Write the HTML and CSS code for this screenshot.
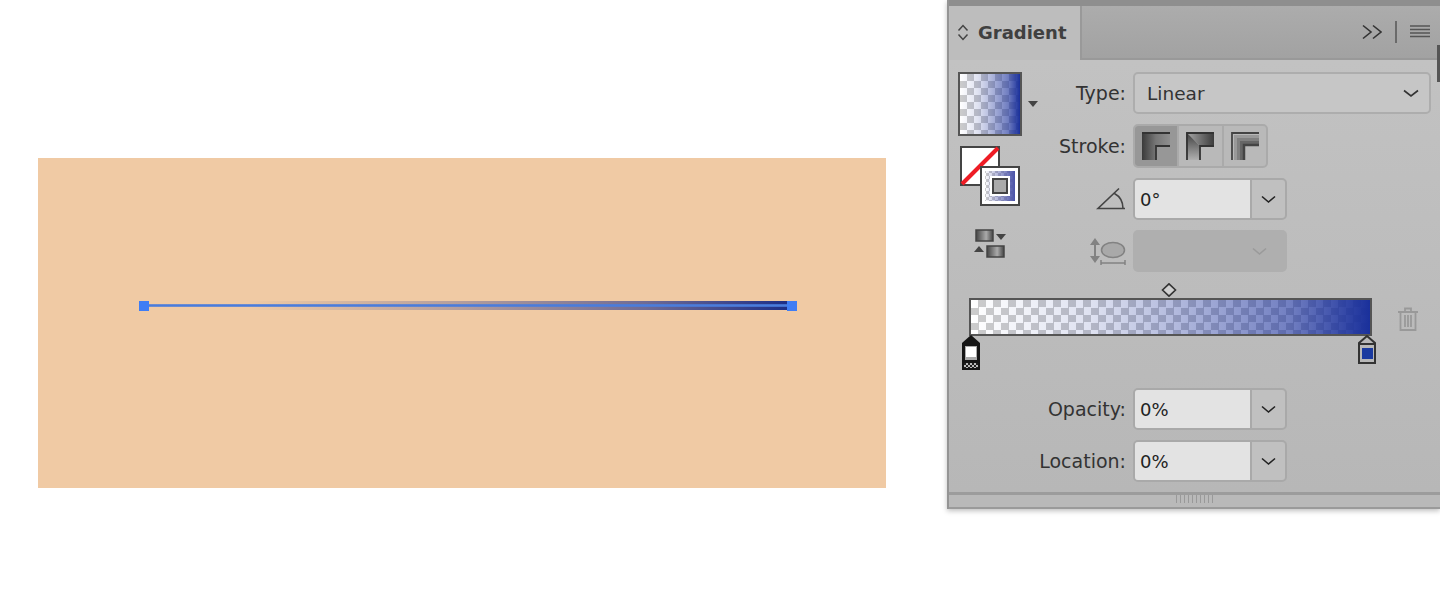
FILE: index.html
```html
<!DOCTYPE html>
<html lang="en">
<head>
<meta charset="utf-8">
<title>Gradient panel</title>
<link rel="stylesheet" href="styles.css">
</head>
<body>
<div class="page">
  <main class="stage">
    <div class="artboard">
      <div class="stroke-band"></div>
      <div class="path-line"></div>
      <div class="anchor anchor-start"></div>
      <div class="anchor anchor-end"></div>
    </div>
  </main>
  <aside class="panel">
    <div class="panel-top"></div>
    <header class="tabbar">
      <div class="tab">
        <svg class="tab-arrows" width="12" height="17" viewBox="0 0 12 17"><path d="M1.5 6.5 6 1.5l4.500 5M1.500 10.500 6 15.500l4.500-5" fill="none" stroke="#444" stroke-width="1.500"/></svg>
        <span class="tab-title">Gradient</span>
      </div>
      <div class="tab-tools">
        <svg width="20" height="16" viewBox="0 0 20 16"><path d="M1 1.500 9 8l-8 6.500M11 1.500 19 8l-8 6.500" fill="none" stroke="#333" stroke-width="1.600"/></svg>
        <span class="tool-divider"></span>
        <svg width="20" height="14" viewBox="0 0 20 14"><path d="M0 1h20M0 4.500h20M0 8h20M0 11.500h20" stroke="#555" stroke-width="1.500"/></svg>
      </div>
    </header>
    <div class="scroll-mark"></div>
    <div class="panel-body">
      <section class="upper">
        <div class="tools">
          <div class="swatch-row">
            <div class="swatch"></div>
            <span class="caret"></span>
          </div>
          <svg class="fill-stroke" width="62" height="62" viewBox="0 0 62 62">
            <defs>
              <linearGradient id="fs" x1="0" x2="1" y1="0" y2="0"><stop offset="0" stop-color="#4a52a8" stop-opacity="0"/><stop offset="1" stop-color="#4a52a8"/></linearGradient>
              <pattern id="fc" width="6" height="6" patternUnits="userSpaceOnUse"><rect width="6" height="6" fill="#fff"/><rect width="3" height="3" fill="#ccc"/><rect x="3" y="3" width="3" height="3" fill="#ccc"/></pattern>
            </defs>
            <rect x="2" y="1" width="38" height="38" fill="#fff" stroke="#444" stroke-width="2"/>
            <path d="M3 38 39 2" stroke="#ee1c25" stroke-width="4"/>
            <rect x="22" y="21" width="38" height="38" fill="#fff" stroke="#444" stroke-width="2"/>
            <rect x="26" y="25" width="30" height="30" fill="url(#fc)"/>
            <rect x="26" y="25" width="30" height="30" fill="url(#fs)"/>
            <rect x="31" y="30" width="20" height="20" fill="#fff"/>
            <rect x="34" y="33" width="14" height="14" fill="#aaa" stroke="#444" stroke-width="2"/>
          </svg>
          <svg class="swap" width="32" height="30" viewBox="0 0 32 30">
            <defs><linearGradient id="sw" x1="0" x2="1" y1="0" y2="0"><stop offset="0" stop-color="#444"/><stop offset=".6" stop-color="#aaa"/><stop offset="1" stop-color="#444"/></linearGradient></defs>
            <rect x="2" y="1" width="17" height="11" fill="url(#sw)" stroke="#444" stroke-width="1.500"/>
            <path d="M22 5h10l-5 6z" fill="#444"/>
            <rect x="13" y="17" width="17" height="11" fill="url(#sw)" stroke="#444" stroke-width="1.500"/>
            <path d="M0 23h10L5 17z" fill="#444"/>
          </svg>
        </div>
        <div class="fields">
          <div class="row">
            <span class="label">Type:</span>
            <div class="select">
              <span>Linear</span>
              <svg class="chev" width="16" height="9" viewBox="0 0 16 9"><path d="M1 1.500 8 7l7-5.500" fill="none" stroke="#333" stroke-width="1.600"/></svg>
            </div>
          </div>
          <div class="row row-stroke">
            <span class="label">Stroke:</span>
            <div class="seg">
              <div class="seg-btn seg-on">
                <svg width="28" height="28" viewBox="0 0 28 28"><defs><linearGradient id="a1" x1="0" x2="1" y1="0" y2="0"><stop offset="0" stop-color="#3a3a3a"/><stop offset=".5" stop-color="#777"/><stop offset="1" stop-color="#8e8e8e"/></linearGradient></defs><path d="M0 0h28v14H14v14H0z" fill="url(#a1)"/><path d="M14 28V14h14M0 1h28" fill="none" stroke="#333" stroke-width="1.800"/></svg>
              </div>
              <div class="seg-btn">
                <svg width="28" height="28" viewBox="0 0 28 28"><defs><linearGradient id="a2" x1="0" x2="1" y1="0" y2="0"><stop offset="0" stop-color="#aaa"/><stop offset="1" stop-color="#3c3c3c"/></linearGradient><linearGradient id="a3" x1="0" x2="0" y1="0" y2="1"><stop offset="0" stop-color="#3c3c3c"/><stop offset="1" stop-color="#b0b0b0"/></linearGradient></defs><path d="M0 0h28v14H14z" fill="url(#a2)"/><path d="M0 0l14 14v14H0z" fill="url(#a3)"/><path d="M14 28V14h14M1 28V1h27" fill="none" stroke="#333" stroke-width="1.800"/></svg>
              </div>
              <div class="seg-btn">
                <svg width="28" height="28" viewBox="0 0 28 28"><path d="M1 28V1h27" fill="none" stroke="#444" stroke-width="1.800"/><path d="M4.500 28V4.500H28" fill="none" stroke="#999" stroke-width="3"/><path d="M7.500 28V7.500H28" fill="none" stroke="#808080" stroke-width="3"/><path d="M10.500 28V10.500H28" fill="none" stroke="#666" stroke-width="3"/><path d="M13 28V13h15" fill="none" stroke="#444" stroke-width="2.500"/></svg>
              </div>
            </div>
          </div>
          <div class="row">
            <svg class="row-icon" width="30" height="24" viewBox="0 0 30 24"><path d="M29 21.500H2L23 1.500M18.500 6.500c5.500 3 8.500 8 8.500 15" fill="none" stroke="#444" stroke-width="1.600"/></svg>
            <div class="combo">
              <span class="combo-value">0°</span>
              <span class="combo-btn"><svg width="15" height="9" viewBox="0 0 15 9"><path d="M1 1.500 7.500 7 14 1.500" fill="none" stroke="#222" stroke-width="1.600"/></svg></span>
            </div>
          </div>
          <div class="row">
            <svg class="row-icon" width="36" height="28" viewBox="0 0 36 28"><path d="M5 5v17" stroke="#828282" stroke-width="2"/><path d="M0 8l5-7 5 7zM0 19l5 7 5-7z" fill="#828282"/><ellipse cx="23" cy="13" rx="11.500" ry="7.500" fill="#a9a9a9" stroke="#828282" stroke-width="1.500"/><path d="M11 26h24M11 23v6M35 23v6" stroke="#828282" stroke-width="1.500"/></svg>
            <div class="combo-off">
              <svg width="15" height="9" viewBox="0 0 15 9"><path d="M1 1.500 7.500 7 14 1.500" fill="none" stroke="#9a9a9a" stroke-width="1.600"/></svg>
            </div>
          </div>
        </div>
      </section>
      <section class="slider">
        <svg class="diamond" width="16" height="14" viewBox="0 0 16 14"><path d="M8 .8 14.500 7 8 13.200 1.500 7z" fill="#d0d0d0" stroke="#333" stroke-width="1.600"/></svg>
        <div class="bar-row">
          <div class="bar"></div>
          <svg class="trash" width="22" height="24" viewBox="0 0 22 24"><path d="M1 5h20M8 5V1.500h6V5M3.500 5v18h15V5M8 8v12M11 8v12M14 8v12" fill="none" stroke="#999" stroke-width="1.800"/></svg>
        </div>
        <div class="stops">
          <svg width="18" height="35" viewBox="0 0 18 35">
            <defs><pattern id="sc" width="4" height="4" patternUnits="userSpaceOnUse"><rect width="4" height="4" fill="#222"/><rect width="2" height="2" fill="#bbb"/><rect x="2" y="2" width="2" height="2" fill="#bbb"/></pattern></defs>
            <path d="M9 0 18 8v27H0V8z" fill="#151515"/>
            <rect x="3" y="11" width="12" height="14" fill="#aaa"/>
            <rect x="4" y="12" width="10" height="10" fill="#fff"/>
            <rect x="2" y="28" width="14" height="5" fill="url(#sc)"/>
          </svg>
          <svg width="18" height="29" viewBox="0 0 18 29">
            <path d="M9 1 17 8v20H1V8z" fill="#b8b8b8" stroke="#333" stroke-width="2"/>
            <path d="M1 9h16" stroke="#333" stroke-width="2"/>
            <rect x="4" y="13" width="11" height="11" fill="#1a3aa0"/>
          </svg>
        </div>
      </section>
      <section class="lower">
        <div class="row">
          <span class="label">Opacity:</span>
          <div class="combo">
            <span class="combo-value">0%</span>
            <span class="combo-btn"><svg width="15" height="9" viewBox="0 0 15 9"><path d="M1 1.500 7.500 7 14 1.500" fill="none" stroke="#222" stroke-width="1.600"/></svg></span>
          </div>
        </div>
        <div class="row">
          <span class="label">Location:</span>
          <div class="combo">
            <span class="combo-value">0%</span>
            <span class="combo-btn"><svg width="15" height="9" viewBox="0 0 15 9"><path d="M1 1.500 7.500 7 14 1.500" fill="none" stroke="#222" stroke-width="1.600"/></svg></span>
          </div>
        </div>
      </section>
    </div>
    <footer class="panel-foot">
      <span class="grip"></span>
    </footer>
  </aside>
</div>
</body>
</html>
```

FILE: styles.css
```css
* { box-sizing: border-box; }

html, body {
  margin: 0;
  padding: 0;
  background: #fff;
}

.page {
  display: flex;
  width: 1440px;
  height: 598px;
  overflow: hidden;
  background: #fff;
  font-family: "DejaVu Sans", "Open Sans", sans-serif;
  color: #333;
}

/* Artboard */
.stage {
  width: 947px;
  flex: none;
  padding: 158px 0 0 38px;
}

.artboard {
  position: relative;
  width: 848px;
  height: 330px;
  background: #f0caa4;
}

.stroke-band {
  position: absolute;
  left: 106px;
  top: 143px;
  width: 644px;
  height: 9px;
  background: linear-gradient(90deg, rgba(30, 48, 140, 0) 16%, rgba(30, 48, 140, .28) 48%, rgba(30, 48, 140, .62) 78%, #1c2e88 100%);
}

.path-line {
  position: absolute;
  left: 106px;
  top: 146px;
  width: 644px;
  height: 3px;
  background: linear-gradient(rgba(74, 124, 220, .55), #4a7cdc 30% 70%, rgba(74, 124, 220, .55));
}

.anchor {
  position: absolute;
  top: 143px;
  width: 10px;
  height: 10px;
  background: #3f7df5;
}

.anchor-start { left: 101px; }
.anchor-end { left: 749px; }

/* Panel */
.panel {
  position: relative;
  width: 493px;
  height: 509px;
  flex: none;
  display: flex;
  flex-direction: column;
  background: #b9b9b9;
  border-left: 2px solid #949494;
  box-shadow: 0 2px 5px rgba(0, 0, 0, .25);
}

.panel-top {
  height: 6px;
  flex: none;
  background: #8e8e8e;
}

.tabbar {
  height: 54px;
  flex: none;
  display: flex;
  justify-content: space-between;
  background: linear-gradient(#acacac, #a2a2a2);
  border-bottom: 2px solid #999;
}

.tab {
  width: 133px;
  height: 54px;
  display: flex;
  align-items: center;
  gap: 9px;
  padding: 0 0 2px 8px;
  background: #bdbdbd;
  border-right: 2px solid #999;
}

.tab-title {
  font-size: 18px;
  font-weight: 700;
  color: #404040;
}

.tab-tools {
  display: flex;
  align-items: center;
  gap: 13px;
  padding: 0 10px 0 0;
}

.tool-divider {
  width: 2px;
  height: 22px;
  background: #6a6a6a;
}

.scroll-mark {
  position: absolute;
  right: 0;
  top: 45px;
  width: 3px;
  height: 37px;
  background: #555;
}

.panel-body {
  flex: 1;
  background: linear-gradient(#c2c2c2, #b7b7b7);
}

.upper {
  display: flex;
  padding: 12px 9px 0 9px;
}

.tools {
  width: 90px;
  flex: none;
  display: flex;
  flex-direction: column;
}

.swatch-row {
  display: flex;
  align-items: flex-start;
  gap: 6px;
}

.swatch {
  width: 64px;
  height: 64px;
  border: 2px solid #555;
  background:
    linear-gradient(90deg, rgba(26, 48, 155, 0) 0, rgba(26, 48, 155, .14) 30%, rgba(26, 48, 155, .32) 50%, rgba(26, 48, 155, .62) 80%, #1a309b 100%),
    repeating-conic-gradient(#ccc 0 25%, #fff 0 50%) 0 0 / 14px 14px;
}

.caret {
  margin-top: 29px;
  width: 0;
  height: 0;
  border-left: 5px solid transparent;
  border-right: 5px solid transparent;
  border-top: 6px solid #444;
}

.fill-stroke {
  display: block;
  margin: 10px 0 0 1px;
}

.swap {
  display: block;
  margin: 21px 0 0 16px;
}

.fields {
  flex: 1;
  display: flex;
  flex-direction: column;
  gap: 10px;
}

.row {
  display: grid;
  grid-template-columns: 1fr 298px;
  align-items: center;
  justify-items: start;
  column-gap: 7px;
  height: 42px;
}

.row > .label,
.row > .row-icon { justify-self: end; }

.row-stroke { height: 44px; }

.label {
  font-size: 19px;
  color: #333;
  white-space: nowrap;
}

.select {
  width: 298px;
  height: 42px;
  display: flex;
  align-items: center;
  justify-content: space-between;
  padding: 0 10px 0 12px;
  font-size: 18.500px;
  background: #c6c6c6;
  border: 2px solid #adadad;
  border-radius: 5px;
}

.seg {
  display: flex;
  width: 135px;
  height: 44px;
  background: #b9b9b9;
  border: 2px solid #aaa;
  border-radius: 5px;
  overflow: hidden;
}

.seg-btn {
  flex: 1;
  display: flex;
  align-items: center;
  justify-content: center;
  border-right: 2px solid #aaa;
}

.seg-btn:last-child { border-right: 0; }
.seg-on { background: #979797; }

.row-icon { flex: none; }

.combo {
  width: 154px;
  height: 42px;
  display: flex;
  background: #c0c0c0;
  border: 2px solid #a9a9a9;
  border-radius: 5px;
  overflow: hidden;
}

.combo-value {
  width: 117px;
  display: flex;
  align-items: center;
  padding-left: 5px;
  font-size: 18px;
  color: #222;
  background: #e3e3e3;
  border-right: 2px solid #a9a9a9;
}

.combo-btn {
  flex: 1;
  display: flex;
  align-items: center;
  justify-content: center;
}

.combo-off {
  width: 154px;
  height: 42px;
  display: flex;
  align-items: center;
  justify-content: flex-end;
  padding-right: 20px;
  background: #afafaf;
  border-radius: 5px;
}

.slider {
  display: flex;
  flex-direction: column;
  align-items: flex-start;
  padding: 11px 0 0 20px;
}

.diamond {
  display: block;
  margin-left: 192px;
}

.bar-row {
  display: flex;
  align-items: center;
  gap: 25px;
  margin-top: 1px;
}

.bar {
  width: 403px;
  height: 38px;
  border: 2px solid #555;
  background:
    linear-gradient(90deg, rgba(26, 48, 155, 0) 0, rgba(26, 48, 155, .14) 30%, rgba(26, 48, 155, .32) 50%, rgba(26, 48, 155, .62) 80%, #1a309b 100%),
    repeating-conic-gradient(#ccc 0 25%, #fff 0 50%) 0 0 / 15px 15px;
}

.trash {
  display: block;
  margin-top: 4px;
}

.stops {
  width: 414px;
  display: flex;
  justify-content: space-between;
  align-items: flex-start;
  margin: -1px 0 0 -7px;
}

.lower {
  display: flex;
  flex-direction: column;
  gap: 10px;
  width: 338px;
  margin-top: 18px;
}

.lower .row { grid-template-columns: 1fr 154px; }

.panel-foot {
  height: 17px;
  flex: none;
  display: flex;
  justify-content: center;
  background: #b9b9b9;
  border-top: 3px solid #9c9c9c;
  border-bottom: 2px solid #9a9a9a;
}

.grip {
  width: 38px;
  height: 8px;
  background: repeating-linear-gradient(90deg, #999 0 1px, transparent 1px 4px);
}
```
